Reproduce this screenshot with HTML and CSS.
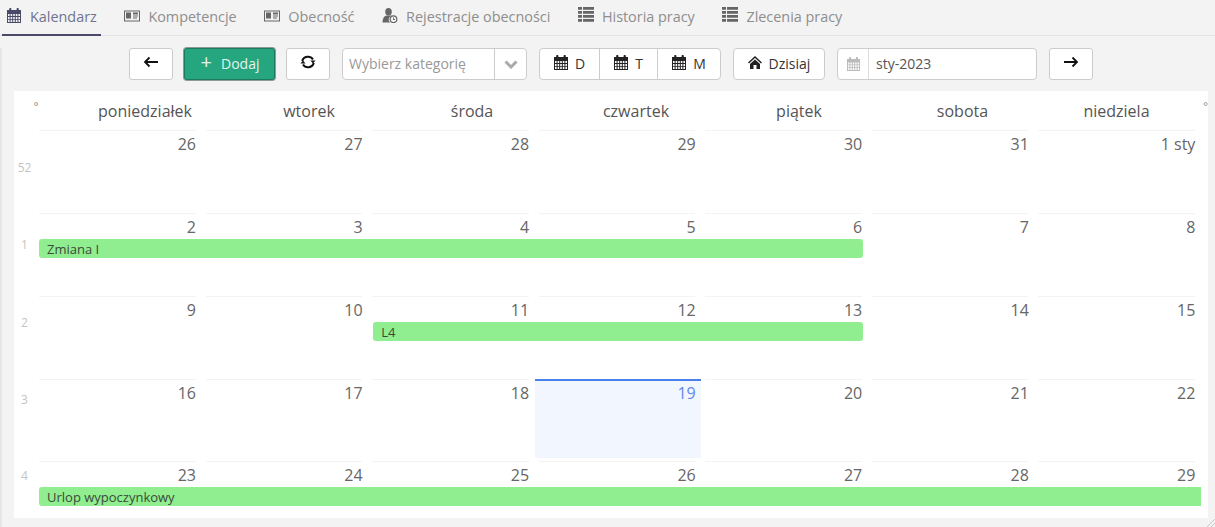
FILE: index.html
```html
<!DOCTYPE html>
<html lang="pl">
<head>
<meta charset="utf-8">
<title>Kalendarz</title>
<link rel="stylesheet" href="styles.css">
</head>
<body>
<svg class="defs" width="0" height="0" aria-hidden="true">
  <defs>
    <symbol id="i-cal" viewBox="0 0 14 15">
      <path fill="currentColor" fill-rule="evenodd" d="M0 2h2.200V.8Q2.200 0 3 0h.6q.8 0 .8.8V2h5.200V.8q0-.8.8-.8h.6q.8 0 .8.8V2H14v13H0zM1 6v2h1.600V6zm2.600 0v2h1.600V6zm2.600 0v2h1.600V6zm2.600 0v2h1.600V6zm2.600 0v2H13V6zM1 8.900v2h1.600v-2zm2.600 0v2h1.600v-2zm2.600 0v2h1.600v-2zm2.600 0v2h1.600v-2zm2.600 0v2H13v-2zM1 11.800V14h1.600v-2.200zm2.600 0V14h1.600v-2.200zm2.600 0V14h1.600v-2.200zm2.600 0V14h1.600v-2.200zm2.600 0V14H13v-2.200z"/>
    </symbol>
    <symbol id="i-card" viewBox="0 0 16 12">
      <path fill="currentColor" fill-rule="evenodd" d="M0 1h16v11H0zM1 2v9h14V2zm1 1h5v6H2zm7 0h5v2H9zm0 3h5v1H9zm0 2h4v1H9z"/>
    </symbol>
    <symbol id="i-list" viewBox="0 0 16 14" preserveAspectRatio="none">
      <path fill="currentColor" d="M0 0h4v2.500H0zM5 0h11v2.500H5zM0 3.700h4v2.500H0zM5 3.700h11v2.500H5zM0 7.500h4V10H0zM5 7.500h11V10H5zM0 11.300h4v2.500H0zM5 11.300h11v2.500H5z"/>
    </symbol>
    <symbol id="i-user" viewBox="0 0 15 15">
      <ellipse cx="6" cy="3.800" rx="3.300" ry="3.800" fill="currentColor"/>
      <path fill="currentColor" d="M0 14.500q0-6 4-7h4q2 .5 3 .7a3.500 3.500 0 0 0-3 6.300z"/>
      <circle cx="11" cy="11.200" r="3.300" fill="none" stroke="currentColor" stroke-width="1.200"/>
      <path fill="none" stroke="currentColor" d="M11 9.500v2h1.500"/>
    </symbol>
    <symbol id="i-home" viewBox="0 0 14 13">
      <path fill="currentColor" d="M7 0l7 6.500-1 1-6-5.500-6 5.500-1-1zM7 3.500l5 4.500v5H8.500V9h-3v4H2V8z"/>
    </symbol>
  </defs>
</svg>

<nav class="tabs">
  <a class="tab active"><svg class="tab-ico cal"><use href="#i-cal"/></svg>Kalendarz</a>
  <a class="tab"><svg class="tab-ico"><use href="#i-card"/></svg>Kompetencje</a>
  <a class="tab"><svg class="tab-ico"><use href="#i-card"/></svg>Obecność</a>
  <a class="tab"><svg class="tab-ico"><use href="#i-user"/></svg>Rejestracje obecności</a>
  <a class="tab"><svg class="tab-ico list"><use href="#i-list"/></svg>Historia pracy</a>
  <a class="tab"><svg class="tab-ico list"><use href="#i-list"/></svg>Zlecenia pracy</a>
</nav>

<main class="main">
  <div class="toolbar">
    <button class="btn arrow" type="button">
      <svg class="arrow-ico" viewBox="0 0 16 12"><path d="M15 6H2M6.500 1.500 2 6l4.500 4.500"/></svg>
    </button>
    <button class="btn add" type="button"><span class="plus">+</span>Dodaj</button>
    <button class="btn arrow" type="button">
      <svg class="refresh-ico" viewBox="0 0 16 16"><path d="M2.200 7A6 6 0 0 1 13 5.500M13.800 9A6 6 0 0 1 3 10.500"/><path class="fill" d="M10.500 6.500h5l-2.500 3zM.5 9.500h5L3 6.500z"/></svg>
    </button>
    <div class="select">
      <span class="select-text">Wybierz kategorię</span>
      <span class="select-caret"><svg viewBox="0 0 14 9"><path d="M1.500 1.500 7 7l5.500-5.500"/></svg></span>
    </div>
    <div class="btn-group">
      <button class="btn seg d" type="button"><svg class="cal-ico"><use href="#i-cal"/></svg>D</button>
      <button class="btn seg t" type="button"><svg class="cal-ico"><use href="#i-cal"/></svg>T</button>
      <button class="btn seg m" type="button"><svg class="cal-ico"><use href="#i-cal"/></svg>M</button>
    </div>
    <button class="btn today" type="button"><svg class="home-ico"><use href="#i-home"/></svg>Dzisiaj</button>
    <div class="date">
      <span class="date-addon"><svg class="date-ico"><use href="#i-cal"/></svg></span>
      <span class="date-text">sty-2023</span>
    </div>
    <button class="btn arrow" type="button">
      <svg class="arrow-ico" viewBox="0 0 16 12"><path d="M1 6h13M9.500 1.500 14 6l-4.500 4.500"/></svg>
    </button>
  </div>

  <section class="calendar">
    <div class="head">
      <span class="deg">°</span>
      <span>poniedziałek</span><span>wtorek</span><span>środa</span><span>czwartek</span><span>piątek</span><span>sobota</span><span>niedziela</span>
      <span class="deg deg-r">°</span>
    </div>

    <div class="week">
      <span class="wk wk-a">52</span>
      <div class="day">26</div><div class="day">27</div><div class="day">28</div><div class="day">29</div><div class="day">30</div><div class="day">31</div><div class="day">1 sty</div>
    </div>

    <div class="week">
      <span class="wk wk-b">1</span>
      <div class="day">2</div><div class="day">3</div><div class="day">4</div><div class="day">5</div><div class="day">6</div><div class="day">7</div><div class="day">8</div>
      <div class="event ev-zmiana">Zmiana I</div>
    </div>

    <div class="week">
      <span class="wk wk-c">2</span>
      <div class="day">9</div><div class="day">10</div><div class="day">11</div><div class="day">12</div><div class="day">13</div><div class="day">14</div><div class="day">15</div>
      <div class="event ev-l4">L4</div>
    </div>

    <div class="week">
      <span class="wk wk-d">3</span>
      <div class="day">16</div><div class="day">17</div><div class="day">18</div><div class="day now">19</div><div class="day">20</div><div class="day">21</div><div class="day">22</div>
    </div>

    <div class="week last">
      <span class="wk wk-e">4</span>
      <div class="day">23</div><div class="day">24</div><div class="day">25</div><div class="day">26</div><div class="day">27</div><div class="day">28</div><div class="day">29</div>
      <div class="event ev-urlop">Urlop wypoczynkowy</div>
    </div>
  </section>
</main>
<svg class="grip" viewBox="0 0 10 10"><path d="M0 10 10 0M5 10l5-5"/></svg>
</body>
</html>
```
FILE: styles.css
```css
* { box-sizing: border-box; }

html, body { margin: 0; height: 100%; }

body {
  position: relative;
  height: 527px;
  overflow: hidden;
  background: #f3f3f3;
  font-family: "Open Sans", sans-serif;
  font-size: 14px;
  color: #333;
}

.defs { position: absolute; }

.tabs {
  display: flex;
  height: 36px;
  padding-left: 2px;
  border-bottom: 1px solid #e4e4e4;
}

.tab {
  display: flex;
  align-items: center;
  height: 36px;
  padding: 0 4px 3px;
  margin-right: 19.600px;
  font-size: 14.400px;
  color: #8e8e8e;
  white-space: nowrap;
}

.tab.active {
  padding-bottom: 1px;
  color: #6f7391;
  border-bottom: 2px solid #4a4a68;
}

.tab-ico {
  width: 16px;
  height: 15px;
  margin: -2px 8px 0 0;
  color: #666;
}

.tab-ico.cal { color: #4a4a68; }
.tab-ico.list { margin-top: -4px; }

.main {
  height: 491px;
  border-left: 2px solid #e6e6e6;
}

.toolbar {
  display: flex;
  align-items: stretch;
  gap: 12px;
  height: 32px;
  margin-top: 12px;
  padding-left: 127px;
}

.btn {
  display: flex;
  align-items: center;
  justify-content: center;
  padding: 0 0 2px;
  font: 14px "Open Sans", sans-serif;
  color: #333;
  background: #fff;
  border: 1px solid #ccc;
  border-radius: 3px;
}

.arrow { width: 44px; }

.arrow-ico {
  width: 16px;
  height: 12px;
  margin-top: -2px;
  fill: none;
  stroke: #111;
  stroke-width: 1.800;
}

.refresh-ico {
  width: 16px;
  height: 16px;
  margin-top: -2px;
  fill: none;
  stroke: #111;
  stroke-width: 2;
}

.refresh-ico .fill { fill: #111; stroke: none; }

.add {
  width: 91px;
  margin: 0 -1px;
  padding-left: 1px;
  color: #e2f3ec;
  background: #26a67f;
  border-color: #1c7a5e;
  box-shadow: 0 0 0 1px #8b9a96;
}

.plus {
  margin-right: 9px;
  font-size: 20px;
  line-height: 18px;
  margin-top: -2px;
}

.select {
  display: flex;
  width: 185px;
  background: #fff;
  border: 1px solid #ccc;
  border-radius: 4px;
}

.select-text {
  flex: 1;
  padding-left: 6px;
  line-height: 29px;
  color: #999;
}

.select-caret {
  display: flex;
  align-items: center;
  justify-content: center;
  width: 32px;
  border-left: 1px solid #ccc;
}

.select-caret svg {
  width: 14px;
  height: 9px;
  fill: none;
  stroke: #aaa;
  stroke-width: 3;
}

.btn-group { display: flex; }

.seg { border-radius: 0; margin-left: -1px; }
.seg.d { width: 61px; margin-left: 0; border-radius: 4px 0 0 4px; }
.seg.t { width: 59px; }
.seg.m { width: 64px; border-radius: 0 4px 4px 0; }

.cal-ico {
  width: 14px;
  height: 15px;
  margin: -2px 7px 0 0;
  color: #222;
}

.today { width: 92px; border-radius: 4px; }

.home-ico {
  width: 14px;
  height: 13px;
  margin: -2px 7px 0 0;
  color: #222;
}

.date {
  display: flex;
  width: 200px;
  background: #fff;
  border: 1px solid #ccc;
  border-radius: 4px;
}

.date-addon {
  display: flex;
  align-items: center;
  justify-content: center;
  width: 31px;
  border-right: 1px solid #ddd;
}

.date-ico {
  width: 13px;
  height: 14px;
  margin-top: -1px;
  color: #bbb;
}

.date-text {
  padding-left: 7px;
  line-height: 29px;
  color: #555;
}

.calendar {
  width: 1194px;
  height: 427px;
  margin: 11px 0 0 12px;
  background: #fff;
}

.head {
  display: grid;
  grid-template-columns: 49px 164px 164px 162px 166px 160px 167px 141px 21px;
  height: 39px;
  font-size: 16px;
  line-height: 40px;
  text-align: center;
  color: #555;
}

.deg {
  font-size: 11px;
  line-height: 30px;
  color: #888;
  padding-right: 5px;
}

.deg-r { padding: 0 0 0 16px; }

.week {
  display: grid;
  grid-template-columns: 21px repeat(7, 1fr) 7px;
  grid-template-rows: 26px 20px 1fr;
  height: 83px;
}

.week.last { margin-top: -1px; }

.wk {
  grid-column: 1;
  grid-row: 1 / 4;
  font-size: 12px;
  line-height: 20px;
  text-align: center;
  color: #c4c4c4;
}

.wk-a { padding-top: 28px; }
.wk-b { padding-top: 22px; }
.wk-c { padding-top: 17px; }
.wk-d { padding-top: 11px; }
.wk-e { padding-top: 5px; }

.day {
  position: relative;
  grid-row: 1 / 4;
  padding: 2px 5.600px 0 0;
  font-size: 16px;
  line-height: 24px;
  text-align: right;
  color: #666;
}

.day:nth-of-type(1) { grid-column: 2; }
.day:nth-of-type(2) { grid-column: 3; }
.day:nth-of-type(3) { grid-column: 4; }
.day:nth-of-type(4) { grid-column: 5; }
.day:nth-of-type(5) { grid-column: 6; }
.day:nth-of-type(6) { grid-column: 7; }
.day:nth-of-type(7) { grid-column: 8; }

.day::before {
  content: "";
  position: absolute;
  top: 0;
  left: 4px;
  right: 6px;
  height: 1px;
  background: #f3f3f3;
}

.now {
  height: 79px;
  color: #6188ee;
  background: #f2f6fe;
  border-top: 2px solid #4a80ee;
  padding-top: 0;
}

.now::before { display: none; }

.event {
  z-index: 1;
  grid-row: 2;
  display: flex;
  align-items: center;
  height: 19px;
  padding-left: 8px;
  font-size: 13px;
  color: #3a4a3a;
  background: #90ee90;
  border-radius: 3px;
}

.ev-zmiana { grid-column: 2 / 7; margin: 0 5px 0 4px; }
.ev-l4 { grid-column: 4 / 7; margin: 0 5px; }
.ev-urlop { grid-column: 2 / 9; margin-left: 4px; border-radius: 3px 0 0 3px; }

.grip {
  position: absolute;
  right: 0;
  bottom: 0;
  width: 8px;
  height: 8px;
  fill: none;
  stroke: #bbb;
}
```
